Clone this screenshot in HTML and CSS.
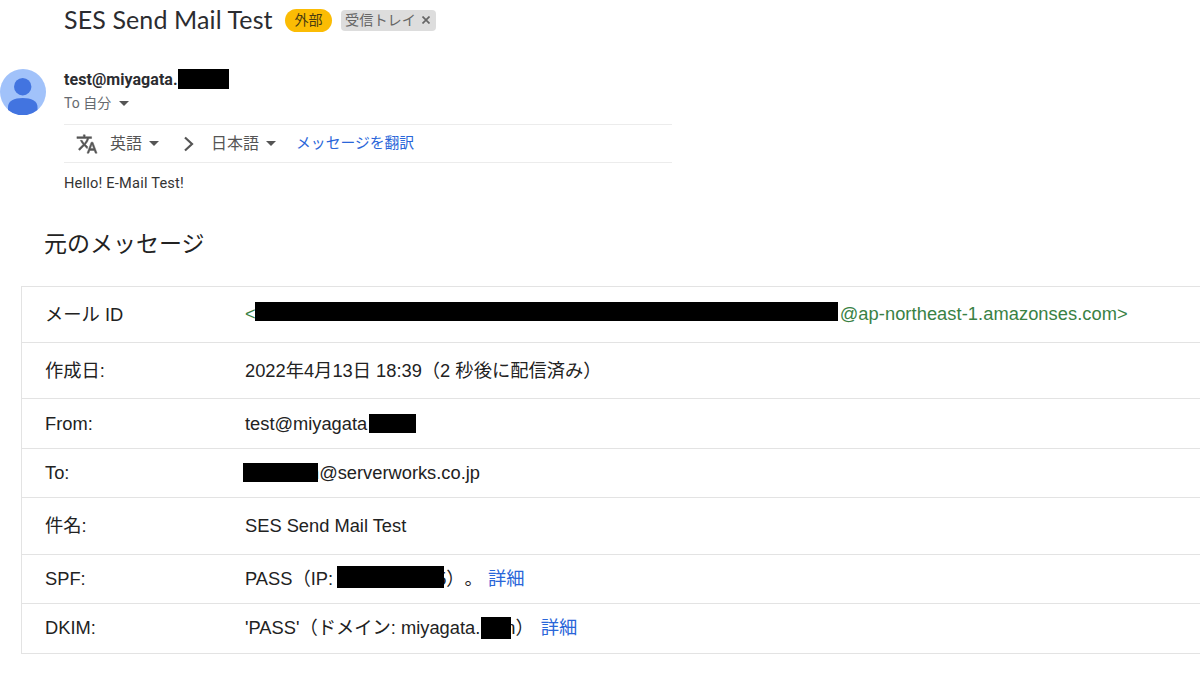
FILE: index.html
```html
<!DOCTYPE html>
<html lang="ja">
<head>
    <meta charset="UTF-8">
    <meta name="viewport" content="width=device-width, initial-scale=1.0">
    <title>SES Send Mail Test</title>
    <link rel="stylesheet" href="styles.css">
</head>
<body>
    <header class="subject">
        <h1>SES Send Mail Test</h1>
        <span class="badge">外部</span>
        <span class="label">受信トレイ <svg width="8" height="8" viewBox="0 0 8 8"><path d="M.5.5l7 7M7.500.5l-7 7" stroke="#666" stroke-width="1.7"/></svg></span>
    </header>
    <section class="mail">
        <svg class="avatar" width="46" height="46" viewBox="0 0 46 46">
            <circle cx="23" cy="23" r="23" fill="#a1c2fa"/>
            <circle cx="22.7" cy="17.7" r="8.7" fill="#4274e0"/>
            <path d="M8 41v-3c0-6 6-9 14.700-9S37.500 32 37.500 38v3A23 23 0 0 1 8 41z" fill="#4274e0"/>
        </svg>
        <div class="mail-body">
            <div class="sender"><b>test@miyagata.</b><span class="mask mask-sender"></span></div>
            <div class="to">To 自分 <i class="arrow"></i></div>
            <div class="translate">
                <svg class="translate-icon" width="22" height="22" viewBox="0 0 24 24" fill="#555" stroke="#555" stroke-width=".5"><path d="M12.870 15.070l-2.540-2.510.03-.03c1.740-1.940 2.980-4.170 3.710-6.530H17V4h-7V2H8v2H1v1.990h11.170C11.500 7.920 10.440 9.750 9 11.350 8.070 10.320 7.300 9.190 6.690 8h-2c.73 1.630 1.730 3.170 2.980 4.560l-5.090 5.020L4 19l5-5 3.110 3.110.76-2.040zM18.500 10h-2L12 22h2l1.120-3h4.750L21 22h2l-4.500-12zm-2.620 7l1.620-4.330L19.120 17h-3.240z"/></svg>
                <span class="lang">英語</span><i class="arrow"></i>
                <svg class="chevron" width="12" height="16" viewBox="0 0 12 16"><path d="M2 1.500L9 8 2 14.500" fill="none" stroke="#555" stroke-width="2.200"/></svg>
                <span class="lang">日本語</span><i class="arrow"></i>
                <a class="translate-link">メッセージを翻訳</a>
            </div>
            <p class="text">Hello! E-Mail Test!</p>
        </div>
    </section>
    <h2>元のメッセージ</h2>
    <div class="info">
        <div class="row tall">
            <span class="name ja">メール ID</span>
            <span class="value green">&lt;<span class="mask mask-id"></span><span class="address">@ap-northeast-1.amazonses.com&gt;</span></span>
        </div>
        <div class="row tall">
            <span class="name ja">作成日:</span>
            <span class="value ja">2022年4月13日 18:39（2 秒後に配信済み）</span>
        </div>
        <div class="row">
            <span class="name">From:</span>
            <span class="value">test@miyagata<span class="mask mask-from"></span></span>
        </div>
        <div class="row">
            <span class="name">To:</span>
            <span class="value"><span class="mask mask-to"></span>n@serverworks.co.jp</span>
        </div>
        <div class="row tall">
            <span class="name ja">件名:</span>
            <span class="value">SES Send Mail Test</span>
        </div>
        <div class="row">
            <span class="name">SPF:</span>
            <span class="value ja">PASS（IP: <span class="mask mask-ip"></span>5）<span class="stop">。</span><a class="spf-link">詳細</a></span>
        </div>
        <div class="row">
            <span class="name">DKIM:</span>
            <span class="value ja">'PASS'（ドメイン: miyagata.<span class="mask mask-domain"></span>n）<a class="dkim-link">詳細</a></span>
        </div>
    </div>
</body>
</html>
```
FILE: styles.css
```css
body {
    margin: 0;
    height: 676px;
    overflow: hidden;
    background-color: #fff;
    color: #222;
    font-family: "Liberation Sans", "Noto Sans CJK JP", sans-serif;
}
.subject {
    display: flex;
    align-items: center;
    height: 40px;
    padding-left: 64px;
}
h1 {
    width: 221px;
    margin: 0;
    padding-bottom: 2px;
    font: 400 25px/38px Lato, sans-serif;
    letter-spacing: 0.120px;
    color: #2b2c30;
    white-space: nowrap;
}
.badge {
    width: 47px;
    height: 23px;
    border-radius: 12px;
    background-color: #fbbc04;
    font-size: 14px;
    line-height: 22px;
    text-align: center;
    color: #4a3c10;
}
.label {
    display: flex;
    align-items: center;
    gap: 6px;
    box-sizing: border-box;
    width: 95px;
    height: 21px;
    margin-left: 9px;
    padding-left: 4px;
    border-radius: 4px;
    background-color: #ddd;
    color: #666;
    font-size: 14.200px;
    line-height: 20px;
    white-space: nowrap;
}
.mail {
    display: flex;
    height: 160px;
    padding-top: 29px;
    box-sizing: border-box;
}
.avatar {
    width: 46px;
    margin-right: 18px;
}
.mail-body {
    width: 608px;
}
.sender {
    display: flex;
    height: 20px;
    font: 16px/21px Roboto, sans-serif;
    letter-spacing: 0.050px;
}
.sender b {
    width: 114px;
    color: #2b2c30;
}
.mask {
    display: inline-block;
    flex: none;
    position: relative;
    background-color: #000;
}
.mask-sender {
    width: 51px;
    height: 20px;
}
.to {
    display: flex;
    align-items: center;
    gap: 8px;
    height: 28px;
    font: 14px/28px Roboto, "Noto Sans CJK JP", sans-serif;
    color: #666a6f;
}
.arrow {
    width: 0;
    border: 5px solid transparent;
    border-top-color: #555;
    border-bottom: 0;
}
.translate {
    display: flex;
    align-items: center;
    height: 37px;
    margin-top: 7px;
    padding-left: 12px;
    border: solid #ececec;
    border-width: 1px 0;
    font-size: 16px;
    color: #555;
}
.translate-icon {
    margin-right: 12px;
}
.lang {
    margin-right: 7px;
    padding-bottom: 3px;
}
.chevron {
    margin: 0 16px 0 24px;
}
.translate-link {
    margin-left: 20px;
    padding-bottom: 4px;
    font-size: 14.800px;
}
a {
    color: #2a66d9;
}
.text {
    margin: 10px 0 0;
    font: 14.600px/20px Roboto, sans-serif;
    letter-spacing: 0.200px;
    color: #333;
}
h2 {
    height: 86px;
    margin: 0 0 0 44px;
    font-size: 23px;
    font-weight: 400;
    line-height: 88px;
}
.info {
    border: solid #e3e3e3;
    border-width: 1px 0 0 1px;
    margin-left: 21px;
    font-size: 18.300px;
}
.row {
    display: flex;
    align-items: center;
    box-sizing: border-box;
    height: 49.500px;
    padding-left: 23px;
    border-bottom: 1px solid #e3e3e3;
}
.tall {
    height: 56.200px;
}
.name {
    width: 200px;
}
.value {
    display: flex;
    align-items: center;
    white-space: pre;
}
.ja {
    padding-bottom: 4px;
}
.green {
    padding-bottom: 2px;
    color: #398144;
}
.address {
    margin-left: 2px;
    letter-spacing: 0.060px;
}
.mask-id {
    width: 583px;
    height: 19px;
    margin: 0 0 4px -1px;
}
.mask-from {
    width: 47px;
    height: 19px;
    margin: 0 0 1px 2px;
}
.mask-to {
    width: 75px;
    height: 19px;
    margin: 0 -9px 2px -2px;
}
.mask-ip {
    width: 107px;
    height: 22px;
    margin: 0 -8px 0 -1px;
}
.mask-domain {
    width: 30px;
    height: 22px;
    margin: 3px -6px 0 1px;
}
.stop {
    margin-left: 0;
}
.spf-link {
    margin-left: 5px;
}
.dkim-link {
    margin-left: 7px;
}
```
